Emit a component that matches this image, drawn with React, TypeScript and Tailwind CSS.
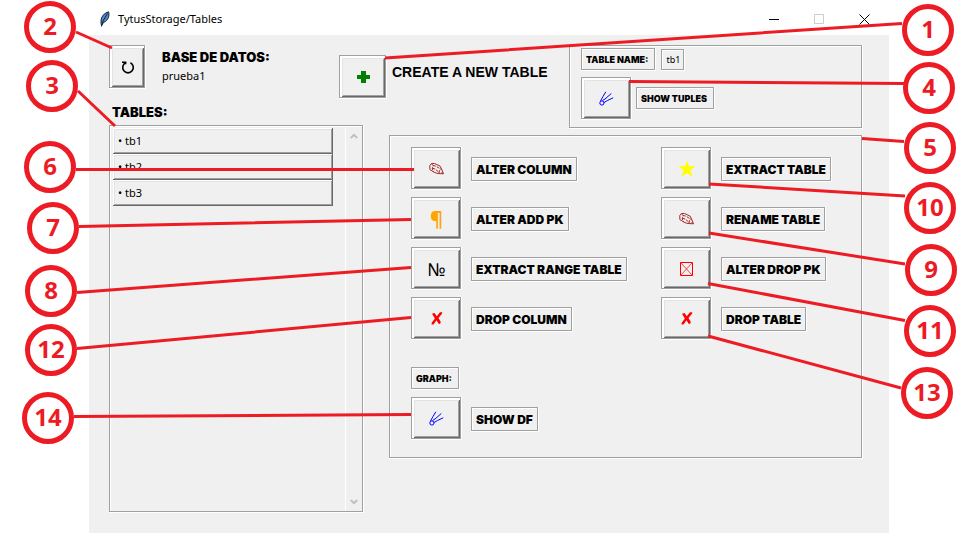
import type { ReactNode } from "react";

const groove =
  "shadow-[inset_-1px_-1px_#ffffff,inset_1px_1px_#a0a0a0,inset_-2px_-2px_#a0a0a0,inset_2px_2px_#ffffff]";
const ridge =
  "shadow-[inset_-1px_-1px_#ffffff,inset_1px_1px_#a0a0a0,inset_-2px_-2px_#a0a0a0,inset_3px_3px_#ffffff,inset_-3px_-3px_#696969,inset_4px_4px_#e3e3e3,inset_-4px_-4px_#a0a0a0]";
const raised =
  "shadow-[inset_-1px_-1px_#696969,inset_1px_1px_#ffffff,inset_-2px_-2px_#a0a0a0,inset_2px_2px_#e3e3e3]";
const uiFont = "font-['Noto_Sans','Open_Sans',sans-serif]";
const heavyFont = "font-['Inter','Liberation_Sans',sans-serif] font-black";

type IconName = "pencil" | "pilcrow" | "numero" | "cross" | "star" | "box" | "comet" | "plus" | "reload";

function Icon({ name }: { name: IconName }) {
  switch (name) {
    case "pilcrow":
      return <span className="font-['Noto_Sans',sans-serif] text-[20px] font-bold leading-5 text-[#ffa500]">¶</span>;
    case "numero":
      return <span className="font-['Noto_Sans',sans-serif] text-[18px] leading-5 text-black">№</span>;
    case "pencil":
      return (
        <svg width="15" height="12" viewBox="0 0 15 12" fill="none" stroke="#a52a2a" strokeWidth="1">
          <path d="M2.5.5H5.5L11 3 13 7 14.5 10.8 9 10.5 5.5 9.5.8 6.5V2.5Z" />
          <path d="M2.5.8 4 2.5 3.2 6 5 9M4 2.5 6.5 3 12 6.2M3.5 5.2 6 6 10 9.2M10 10 10.5 7.5 12.5 6.5M12.5 9.5 14 10.3" strokeDasharray="3 1" />
        </svg>
      );
    case "cross":
      return (
        <svg width="12" height="13" viewBox="0 0 12 13" fill="#ff0000">
          <path d="M1 1.8 3.5 1 5.8 4.3 9 .3 11.2.2 11.2 1.5 7.5 6 9.8 10 9 12 7.4 11.5 5.5 8.3 2.5 12.5.5 12.5.7 10.8 3.9 6.5Z" />
        </svg>
      );
    case "star":
      return (
        <svg width="18" height="18" viewBox="0 0 18 18" fill="#ffff00">
          <path d="M9 .5 11 6.3H17.5L12.3 10.3 14.6 17 9 13 3.4 17 5.7 10.3.5 6.3H7Z" />
        </svg>
      );
    case "box":
      return (
        <svg width="13" height="14" viewBox="0 0 13 14" fill="none" stroke="#ff0000">
          <path d="M.5.5H12.5V13.5H.5Z" />
          <path d="M1 1 12 13M12 1 1 13" strokeWidth=".7" />
        </svg>
      );
    case "comet":
      return (
        <svg width="15" height="15" viewBox="0 0 15 15" fill="none" stroke="#0000ff">
          <circle cx="2.9" cy="12" r="2.1" />
          <path d="M1.5 10 4 5.5 6.8.8M3.5 9.5 6 8 12.3 2.5M5 11.5 8.5 9.5 14.2 6.8" />
        </svg>
      );
    case "plus":
      return (
        <svg width="13" height="12" viewBox="0 0 13 12" fill="#008000">
          <path d="M4 0H9V4H13V8H9V12H4V8H0V4H4Z" />
        </svg>
      );
    case "reload":
      return (
        <svg width="14" height="13" viewBox="0 0 14 13" fill="none" stroke="#000000" strokeWidth="1.6">
          <path d="M1 1.2H4.6V3.2M4.6 1.8A5.3 5.3 0 1 0 9.4 1.8" />
        </svg>
      );
  }
}

function IconButton({ icon, label, size = "h-[43px] w-[51px]" }: { icon: IconName; label: string; size?: string }) {
  return (
    <button type="button" aria-label={label} className={`flex shrink-0 items-center justify-center ${size} ${ridge}`}>
      <Icon name={icon} />
    </button>
  );
}

function Tag({ children, small = false }: { children: ReactNode; small?: boolean }) {
  const scale = small ? "h-[23px] pr-[8px] text-[9px]" : "h-[25px] pr-[6px] text-[12px]";
  return (
    <span className={`flex items-center whitespace-nowrap pl-[5px] text-black ${heavyFont} ${scale} ${groove}`}>
      {children}
    </span>
  );
}

function Action({ icon, label }: { icon: IconName; label: string }) {
  return (
    <div className="flex items-start gap-[9px]">
      <IconButton icon={icon} label={label} />
      <div className="pt-[10px]">
        <Tag>{label}</Tag>
      </div>
    </div>
  );
}

const leftActions: [IconName, string][] = [
  ["pencil", "ALTER COLUMN"],
  ["pilcrow", "ALTER ADD PK"],
  ["numero", "EXTRACT RANGE TABLE"],
  ["cross", "DROP COLUMN"],
];
const rightActions: [IconName, string][] = [
  ["star", "EXTRACT TABLE"],
  ["pencil", "RENAME TABLE"],
  ["box", "ALTER DROP PK"],
  ["cross", "DROP TABLE"],
];

const callouts: [number, string][] = [
  [2, "left-[24px] top-[1px]"],
  [3, "left-[26px] top-[60px]"],
  [6, "left-[24px] top-[141px]"],
  [7, "left-[27px] top-[202px]"],
  [8, "left-[25px] top-[265px]"],
  [12, "left-[25px] top-[324px]"],
  [14, "left-[22px] top-[392px]"],
  [1, "right-[19px] top-[4px]"],
  [4, "right-[18px] top-[62px]"],
  [5, "right-[17px] top-[122px]"],
  [10, "right-[17px] top-[182px]"],
  [9, "right-[16px] top-[244px]"],
  [11, "right-[17px] top-[305px]"],
  [13, "right-[20px] top-[367px]"],
];

const leaders =
  "M76 32 112 48M78 91 115 126M76 169.5H414M79 226.5 411 219.5M77 292.5 411 267.5M77 348.5 411 317.5M74 416.5 411 414.5M902 23.5 385 58M904 83.5 629 81.5M904 141.5 862 138.5M905 196 709 184M905 264 709 233M905 320.5 708 283.5M901 388 708 336";

function Callouts() {
  return (
    <div className="pointer-events-none absolute inset-0">
      <svg className="absolute left-0 top-0 h-[536px] w-full" viewBox="0 0 973 536" preserveAspectRatio="none" fill="none" stroke="#ed1c24" strokeWidth="3">
        <path d={leaders} />
      </svg>
      {callouts.map(([n, place]) => (
        <span
          key={n}
          className={`absolute flex size-[52px] items-center justify-center rounded-full border-[5px] border-[#ed1c24] bg-white pb-[2px] font-['Open_Sans',sans-serif] text-[24px] font-bold leading-none text-[#ed1c24] ${place}`}
        >
          {n}
        </span>
      ))}
    </div>
  );
}

function TitleBar() {
  return (
    <header className="flex h-[35px] items-center pb-[1px] pl-[11px] pr-[13px] pt-[4px]">
      <svg width="10" height="16" viewBox="0 0 10 16">
        <path d="M1.5 14.5C0 9 1.5 3 8.5.8 9.8 4 8.5 9.5 3.5 11.5Z" fill="#4b8bd0" stroke="#17202c" strokeWidth="1" />
        <path d="M1.5 15.5 3 10 7.5 2.5" fill="none" stroke="#17202c" strokeWidth="1" />
      </svg>
      <h1 className={`ml-2 grow text-[11px] leading-4 text-black ${uiFont}`}>TytusStorage/Tables</h1>
      <div className="flex items-center gap-[21px]">
        <button type="button" aria-label="Minimize" className="flex w-6 justify-center">
          <svg width="10" height="10" stroke="#000000"><path d="M0 5.5H10" /></svg>
        </button>
        <button type="button" aria-label="Maximize" className="flex w-6 justify-center">
          <svg width="10" height="10" fill="none" stroke="#cccccc"><path d="M.5.5H9.5V9.5H.5Z" /></svg>
        </button>
        <button type="button" aria-label="Close" className="flex w-6 justify-center">
          <svg width="11" height="11" stroke="#000000"><path d="M.5.5 10.5 10.5M10.5.5.5 10.5" /></svg>
        </button>
      </div>
    </header>
  );
}

function Chevron({ down = false }: { down?: boolean }) {
  return (
    <svg width="8" height="6" viewBox="0 0 8 6" fill="none" stroke="#bfbfbf" strokeWidth="2">
      <path d={down ? "M.8 1 4 4.2 7.2 1" : "M.8 5 4 1.8 7.2 5"} />
    </svg>
  );
}

export default function App() {
  return (
    <div className="relative min-h-[536px] bg-white pl-[89px] pr-[84px]">
      <TitleBar />
      <main className="grid h-[498px] grid-cols-[230px_25px_25px_1fr] grid-rows-[59px_31px_1fr] bg-[#f0f0f0] pb-5 pl-5 pr-[26px] pt-[10px]">
        <section className="col-start-1 row-start-1 flex items-start gap-4">
          <IconButton icon="reload" label="Reload" size="h-[44px] w-[37px]" />
          <div className="pt-[3px]">
            <h2 className={`whitespace-nowrap text-[13px] leading-[18px] text-black ${heavyFont}`}>BASE DE DATOS:</h2>
            <p className={`text-[11px] leading-5 text-black ${uiFont}`}>prueba1</p>
          </div>
        </section>

        <section className="col-span-3 col-start-2 row-span-2 row-start-1 flex items-start justify-between">
          <div className="flex items-center gap-[5px] pt-[10px]">
            <IconButton icon="plus" label="Create a new table" size="h-[44px] w-[48px]" />
            <h2 className="whitespace-nowrap pb-[10px] font-['Liberation_Sans',sans-serif] text-[14px] font-bold leading-4 text-black">
              CREATE A NEW TABLE
            </h2>
          </div>
          <div className={`flex h-[84px] w-[294px] flex-col gap-[6px] pl-3 pt-[3px] ${groove}`}>
            <div className="flex items-end gap-[5px]">
              <Tag small>TABLE NAME:</Tag>
              <span className={`flex h-[22px] items-center px-[5px] text-[9px] text-black ${uiFont} ${groove}`}>tb1</span>
            </div>
            <div className="flex items-start gap-1">
              <IconButton icon="comet" label="Show tuples" />
              <div className="pt-[10px]">
                <Tag small>SHOW TUPLES</Tag>
              </div>
            </div>
          </div>
        </section>

        <section className="col-span-2 col-start-1 row-span-2 row-start-2 flex flex-col">
          <h2 className={`h-[21px] pl-[3px] text-[13px] leading-4 text-black ${heavyFont}`}>TABLES:</h2>
          <div className={`flex grow justify-between py-[3px] pl-[4px] pr-[2px] ${groove}`}>
            <ul className="w-[220px]">
              {["tb1", "tb2", "tb3"].map((name) => (
                <li key={name}>
                  <button type="button" className={`block h-[26px] w-full px-[5px] text-left text-[11px] leading-[26px] text-black ${uiFont} ${raised}`}>
                    • {name}
                  </button>
                </li>
              ))}
            </ul>
            <div className="flex w-[17px] flex-col items-center justify-between border-l border-white py-[5px]">
              <Chevron />
              <Chevron down />
            </div>
          </div>
        </section>

        <section className={`col-start-4 row-start-3 h-[324px] pl-[22px] pt-3 ${groove}`}>
          <div className="grid grid-cols-[250px_1fr]">
            <div className="flex flex-col gap-[7px]">
              {leftActions.map(([icon, label]) => <Action key={label} icon={icon} label={label} />)}
            </div>
            <div className="flex flex-col gap-[7px]">
              {rightActions.map(([icon, label]) => <Action key={label} icon={icon} label={label} />)}
            </div>
          </div>
          <div className="mt-[27px] flex flex-col items-start gap-[7px]">
            <Tag small>GRAPH:</Tag>
            <Action icon="comet" label="SHOW DF" />
          </div>
        </section>
      </main>
      <Callouts />
    </div>
  );
}
